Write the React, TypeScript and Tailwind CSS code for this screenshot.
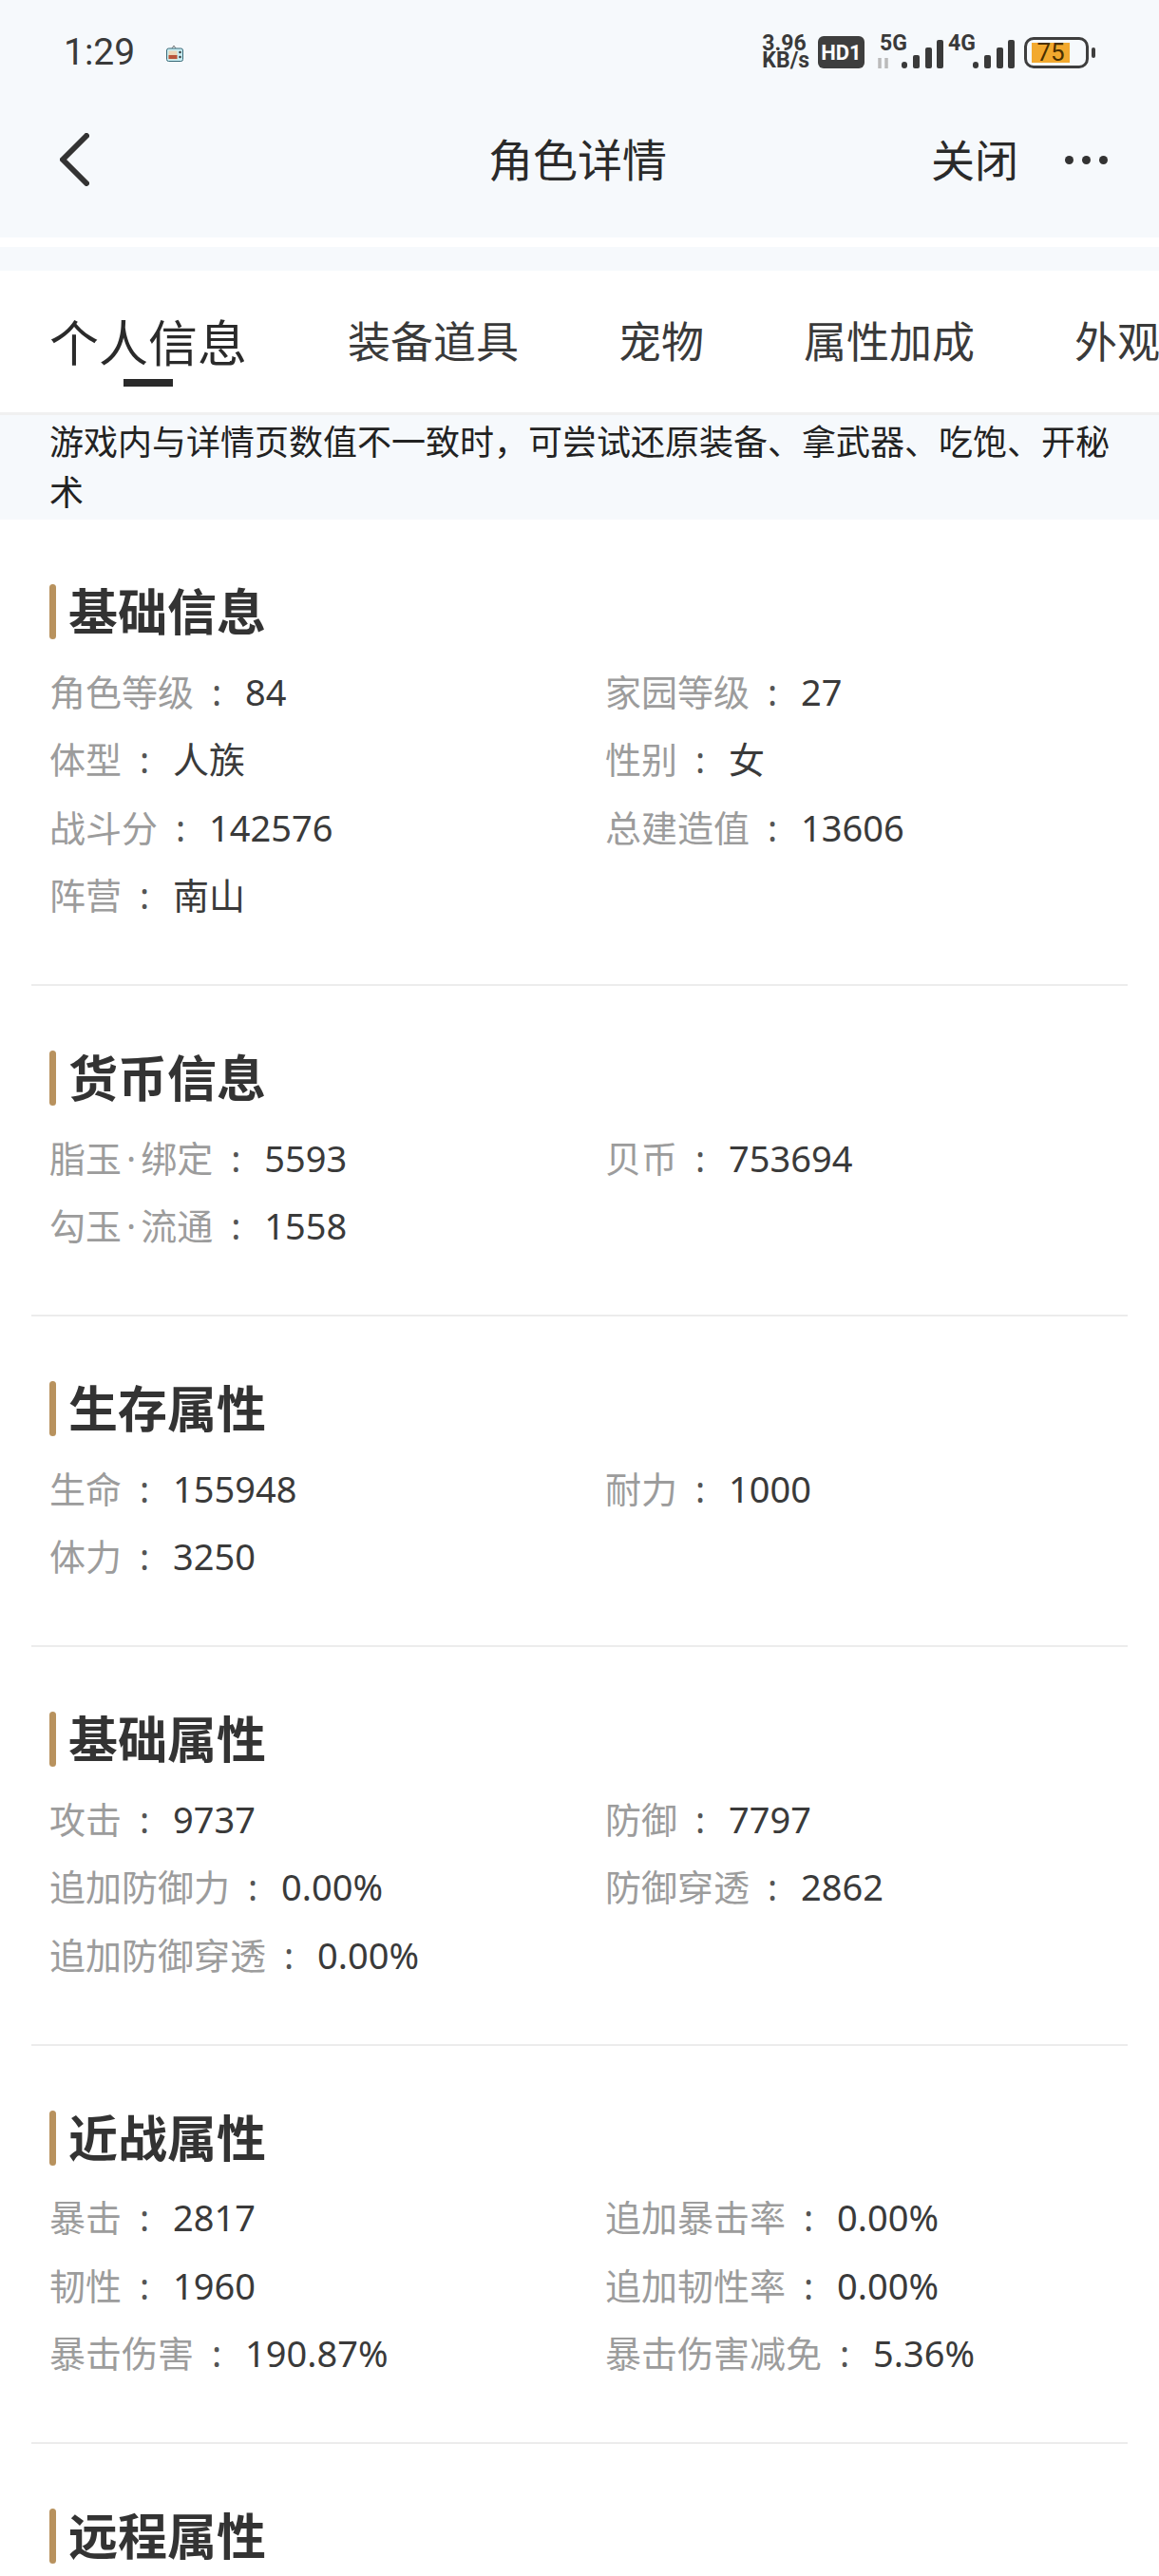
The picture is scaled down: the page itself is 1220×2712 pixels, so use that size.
const font = { fontFamily: '"Noto Sans CJK SC","Noto Sans",sans-serif' };
const itemFont = { fontFamily: '"Noto Sans","Noto Sans CJK SC",sans-serif' };
const roboto = { fontFamily: '"Roboto",sans-serif' };

type Row = [string, string, string?, string?];
const sections: { title: string; rows: Row[] }[] = [
  { title: "基础信息", rows: [["角色等级", "84", "家园等级", "27"], ["体型", "人族", "性别", "女"], ["战斗分", "142576", "总建造值", "13606"], ["阵营", "南山"]] },
  { title: "货币信息", rows: [["脂玉·绑定", "5593", "贝币", "753694"], ["勾玉·流通", "1558"]] },
  { title: "生存属性", rows: [["生命", "155948", "耐力", "1000"], ["体力", "3250"]] },
  { title: "基础属性", rows: [["攻击", "9737", "防御", "7797"], ["追加防御力", "0.00%", "防御穿透", "2862"], ["追加防御穿透", "0.00%"]] },
  { title: "近战属性", rows: [["暴击", "2817", "追加暴击率", "0.00%"], ["韧性", "1960", "追加韧性率", "0.00%"], ["暴击伤害", "190.87%", "暴击伤害减免", "5.36%"]] },
  { title: "远程属性", rows: [] },
];

function Item({ k, v }: { k: string; v: string }) {
  const parts = k.split("·");
  return (
    <div className="flex items-center text-[38px] leading-[52px] whitespace-nowrap" style={itemFont}>
      <span className="text-[#9c9c9c]">
        {parts.length === 2 ? (
          <>
            {parts[0]}
            <span className="px-[5px]">·</span>
            {parts[1]}
          </>
        ) : (
          k
        )}
      </span>
      <span className="text-[#555] ml-[19px] w-[35px]">:</span>
      <span className="text-[#3a3a3a]">{v}</span>
    </div>
  );
}

function Section({ title, rows, last }: { title: string; rows: Row[]; last: boolean }) {
  return (
    <section className={`mx-[33px] pt-[68px] ${last ? "" : "pb-[58px] border-b-2 border-[#ececec]"}`}>
      <div className="flex items-center h-[58px] ml-[19px]">
        <div className="w-[7px] h-[58px] rounded-full bg-[#b8925e]" />
        <h2 className="ml-[13px] -mt-[4px] text-[52px] leading-[58px] font-bold text-[#333]">{title}</h2>
      </div>
      {rows.length > 0 && (
        <div className="ml-[19px] mt-[19px] flex flex-col">
          {rows.map((r, i) => (
            <div key={i} className="grid grid-cols-[585px_1fr] h-[71.5px] items-center">
              <Item k={r[0]} v={r[1]} />
              {r[2] ? <Item k={r[2]} v={r[3] ?? ""} /> : <div />}
            </div>
          ))}
        </div>
      )}
    </section>
  );
}

function Bars() {
  return (
    <>
      <rect x="26" y="29" width="6" height="7" rx="3" fill="#3a3a3a" />
      <rect x="38" y="22" width="7" height="14" rx="2" fill="#3a3a3a" />
      <rect x="51" y="14" width="7" height="22" rx="2" fill="#3a3a3a" />
      <rect x="63" y="6" width="7" height="30" rx="2" fill="#3a3a3a" />
    </>
  );
}

function StatusBar() {
  return (
    <div className="h-[110px] flex items-center justify-between pl-[67px] pr-[67px]">
      <div className="flex items-center">
        <span className="text-[39px] text-[#3a3a3a]" style={roboto}>1:29</span>
        <svg className="ml-[33px] mt-[2px]" width="18" height="18" viewBox="0 0 18 18">
          <path d="M6 4 8 1 10 4" fill="none" stroke="#444" strokeWidth="0.7" />
          <rect x="0.5" y="4" width="17" height="13.5" rx="2" fill="#c7edf2" stroke="#3a6a78" />
          <rect x="2.5" y="6.5" width="9" height="9" fill="#ecd7b8" />
          <rect x="2.5" y="11" width="9" height="4" fill="#b8553a" />
          <circle cx="14.5" cy="8" r="1.2" fill="#333" />
          <circle cx="14.5" cy="13" r="1.2" fill="#333" />
        </svg>
      </div>
      <div className="flex items-center">
        <div className="flex flex-col items-start text-[#3a3a3a] font-bold text-[23px] leading-[18px]" style={roboto}>
          <span>3.96</span>
          <span>KB/s</span>
        </div>
        <div className="ml-[9px] w-[49px] h-[34px] rounded-[6px] bg-[#3e3e3e] text-white text-[22px] font-bold flex items-center justify-center" style={roboto}>HD1</div>
        <svg className="ml-[13px]" width="70" height="46" viewBox="0 -4 70 46">
          <text x="3" y="17" fontSize="23" fontWeight="700" fill="#3a3a3a" fontFamily="Roboto">5G</text>
          <path d="M3 25v11M10 25v11" stroke="#bbb" strokeWidth="3.5" />
          <Bars />
        </svg>
        <svg className="ml-[5px]" width="70" height="46" viewBox="0 -4 70 46">
          <text x="0" y="17" fontSize="23" fontWeight="700" fill="#3a3a3a" fontFamily="Roboto">4G</text>
          <Bars />
        </svg>
        <div className="ml-[10px] w-[68px] h-[33px] rounded-[10px] border-[3px] border-[#3e3e3e] flex items-center pl-[5px]">
          <div className="w-[40px] h-[21px] bg-[#f2a92e] flex items-center justify-center text-[26px] text-[#4a3000] leading-none" style={roboto}>75</div>
        </div>
        <div className="ml-[3px] w-[4px] h-[11px] rounded-[2px] bg-[#3e3e3e]" />
      </div>
    </div>
  );
}

export default function App() {
  return (
    <div className="w-[1220px] h-[2712px] overflow-hidden bg-white" style={font}>
      <div className="bg-[#f6f9fc] h-[250px]">
        <StatusBar />
        <div className="h-[113px] relative flex items-center justify-between pl-[63px] pr-[54px]">
          <svg className="mt-[3px]" width="31" height="56" viewBox="0 0 31 56" fill="none">
            <path d="M28 3 3 28l25 25" stroke="#333" strokeWidth="6" strokeLinecap="round" strokeLinejoin="round" />
          </svg>
          <div className="flex items-center">
            <span className="text-[46px] leading-[60px] text-[#2a2a2a] -mt-[2px]">关闭</span>
            <div className="ml-[49px] mt-[3px] flex gap-[9px]">
              <i className="block w-[9px] h-[9px] rounded-full bg-[#333]" />
              <i className="block w-[9px] h-[9px] rounded-full bg-[#333]" />
              <i className="block w-[9px] h-[9px] rounded-full bg-[#333]" />
            </div>
          </div>
          <div className="absolute left-[514px] top-[26px] text-[47px] leading-[60px] text-[#2a2a2a] whitespace-nowrap">角色详情</div>
        </div>
      </div>
      <div className="h-[10px] bg-white" />
      <div className="h-[25px] bg-[#f6f9fc]" />
      <div className="h-[152px] bg-white border-b-[3px] border-[#f0f0f0] flex items-start pl-[52px] whitespace-nowrap overflow-hidden">
        <div className="relative mt-[39px] text-[52px] leading-[70px] text-[#2a2a2a]">
          个人信息
          <div className="absolute left-[78px] top-[75px] w-[52px] h-[8px] bg-[#2a2a2a]" />
        </div>
        <div className="ml-[106px] mt-[43px] text-[45px] leading-[60px] text-[#3a3a3a]">装备道具</div>
        <div className="ml-[105px] mt-[43px] text-[45px] leading-[60px] text-[#3a3a3a]">宠物</div>
        <div className="ml-[105px] mt-[43px] text-[45px] leading-[60px] text-[#3a3a3a]">属性加成</div>
        <div className="ml-[105px] mt-[43px] text-[45px] leading-[60px] text-[#3a3a3a]">外观</div>
      </div>
      <div className="h-[110px] bg-[#f6f9fc] px-[52px] text-[36px] leading-[53px] text-[#222]">
        游戏内与详情页数值不一致时，可尝试还原装备、拿武器、吃饱、开秘术
      </div>
      {sections.map((s, i) => (
        <Section key={s.title} title={s.title} rows={s.rows} last={i === sections.length - 1} />
      ))}
    </div>
  );
}
